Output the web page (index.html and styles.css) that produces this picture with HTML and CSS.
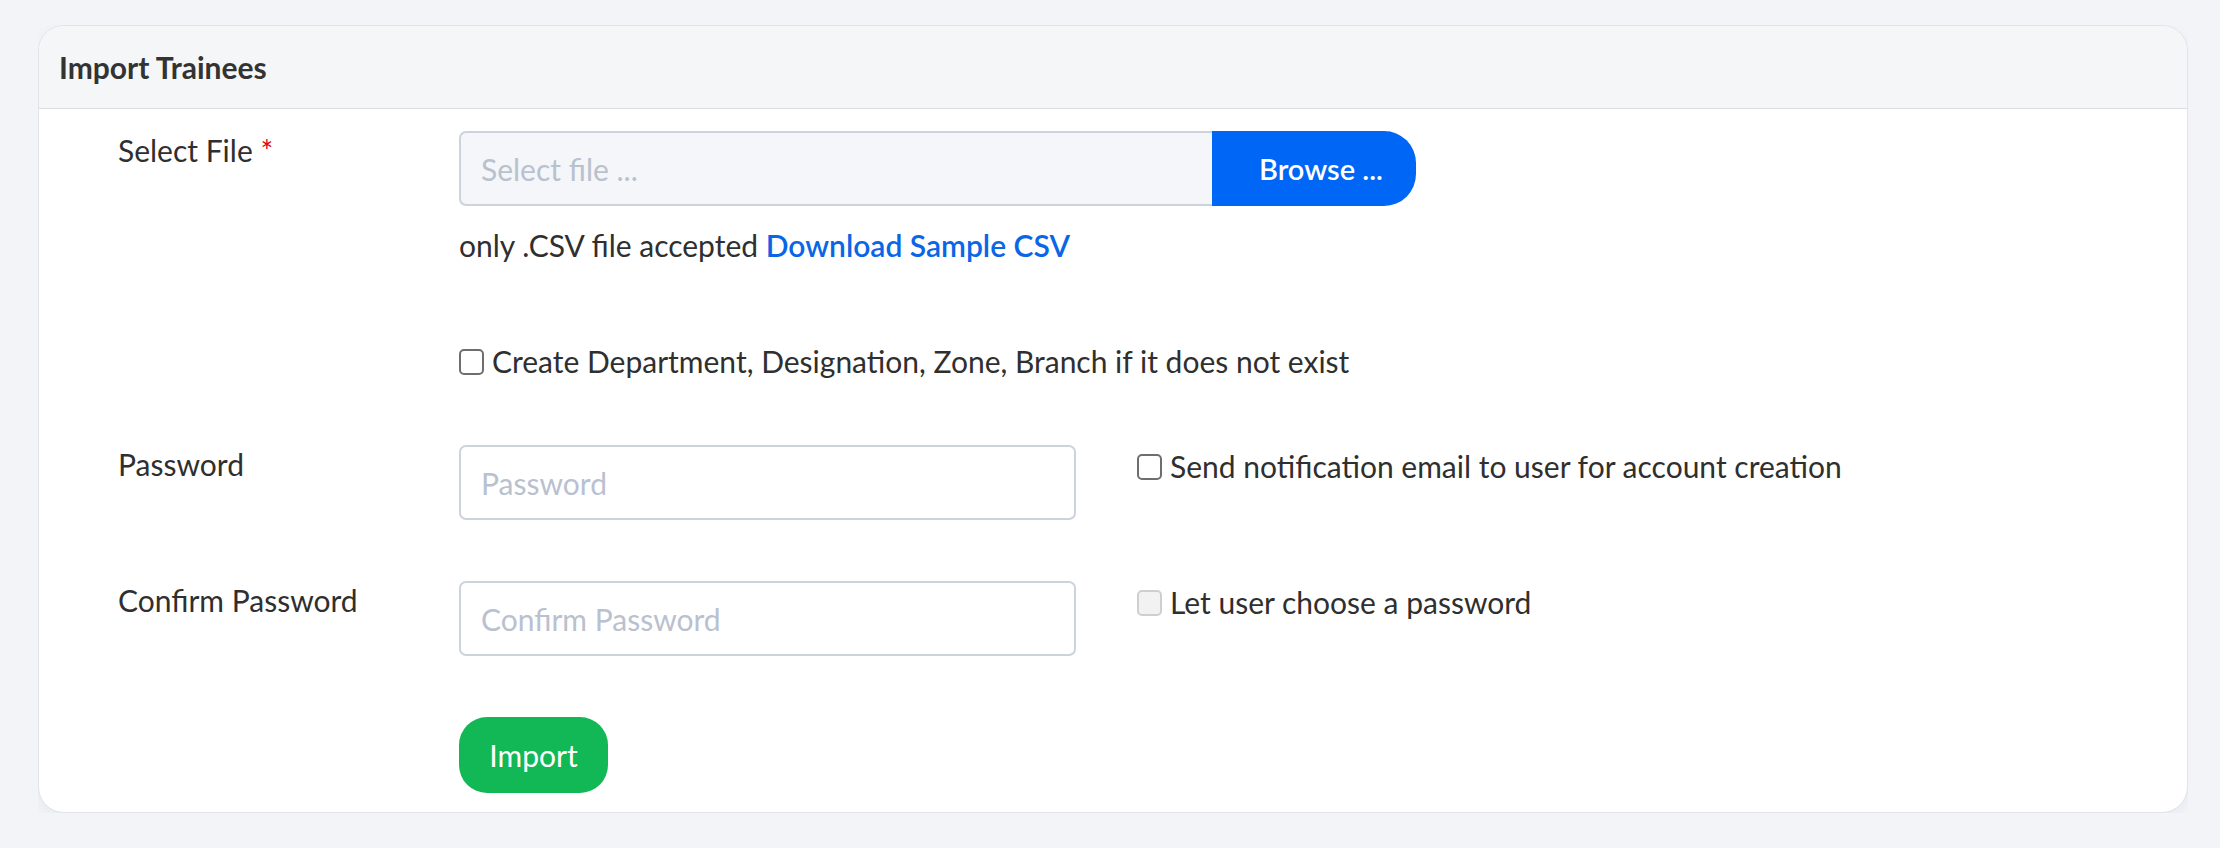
FILE: index.html
```html
<!DOCTYPE html>
<html lang="en">
<head>
    <meta charset="UTF-8">
    <meta name="viewport" content="width=device-width, initial-scale=1.0">
    <title>Import Trainees</title>
    <link rel="stylesheet" href="styles.css">
</head>
<body>
    <div class="card">
        <div class="card-header">Import Trainees</div>

        <form class="card-body" onsubmit="return false">
            <label class="form-label" for="file">Select File <span class="req">*</span></label>
            <div class="file-block">
                <div class="file-group">
                    <input type="text" id="file" class="file-input" placeholder="Select file ..." readonly>
                    <button type="button" class="btn btn-browse">Browse ...</button>
                </div>
                <p class="help">only .CSV file accepted <a href="#">Download Sample CSV</a></p>
            </div>

            <label class="check check-wide">
                <input type="checkbox">
                Create Department, Designation, Zone, Branch if it does not exist
            </label>

            <label class="form-label" for="password">Password</label>
            <input type="password" id="password" class="text-input" placeholder="Password">
            <label class="check">
                <input type="checkbox">
                Send notification email to user for account creation
            </label>

            <label class="form-label" for="confirm">Confirm Password</label>
            <input type="password" id="confirm" class="text-input" placeholder="Confirm Password">
            <label class="check">
                <input type="checkbox" disabled>
                Let user choose a password
            </label>

            <button type="submit" class="btn btn-import">Import</button>
        </form>
    </div>
</body>
</html>
```

FILE: styles.css
```css
body {
    font-family: Lato, "Noto Sans", sans-serif;
    font-size: 30px;
    color: #2f2f2f;
    background-color: #f3f4f8;
    margin: 25px 32px 0 38px;
}
.card {
    background-color: #fff;
    border: 1px solid #e1e3e8;
    border-radius: 26px;
    box-shadow: 0 4px 14px rgba(30, 40, 80, 0.05);
    overflow: hidden;
}
.card-header {
    height: 82px;
    padding: 0 20px;
    display: flex;
    align-items: center;
    background-color: #f5f6f7;
    border-bottom: 1px solid #dcdee2;
    font-weight: 700;
    font-size: 30px;
    color: #333;
}
.card-body {
    display: grid;
    grid-template-columns: 280px 617px 1fr;
    column-gap: 61px;
    row-gap: 61px;
    align-items: start;
    padding: 22px 0 19px 79px;
    margin: 0;
}
.form-label {
    grid-column: 1;
    line-height: 39px;
}
.req {
    color: #e3000f;
}
.file-block {
    grid-column: 2 / 4;
}
.file-group {
    display: flex;
    width: 957px;
    height: 75px;
}
.file-input {
    flex: 1;
    min-width: 0;
    font: inherit;
    padding: 0 20px;
    background-color: #f4f6f9;
    border: 2px solid #cdd3dc;
    border-right: none;
    border-radius: 7px 0 0 7px;
    outline: none;
}
.text-input {
    grid-column: 2;
    height: 75px;
    box-sizing: border-box;
    font: inherit;
    padding: 0 20px;
    background-color: #fff;
    border: 2px solid #cdd3dc;
    border-radius: 7px;
    outline: none;
}
::placeholder {
    color: #b9c1cf;
}
.btn {
    font: inherit;
    color: #fff;
    border: none;
    cursor: pointer;
}
.btn-browse {
    width: 204px;
    padding: 0 26px 0 40px;
    background-color: #0066f5;
    border-radius: 0 32px 32px 0;
    font-weight: 600;
    font-size: 29px;
}
.btn-browse:hover {
    background-color: #0059d6;
}
.help {
    margin: 17px 0 0;
    line-height: 45px;
}
.help a {
    color: #0a66e6;
    font-weight: 600;
    text-decoration: none;
}
.check {
    grid-column: 3;
    display: flex;
    align-items: center;
    gap: 8px;
    line-height: 45px;
    margin-top: -1px;
}
.check-wide {
    grid-column: 2 / 4;
    margin-top: 10px;
}
.check input {
    appearance: none;
    width: 25px;
    height: 26px;
    margin: 0;
    flex-shrink: 0;
    border: 2px solid #6e6e6e;
    border-radius: 5px;
    background-color: #fff;
}
.check input:disabled {
    border-color: #cfcfcf;
    background-color: #f2f2f2;
}
.btn-import {
    grid-column: 2;
    justify-self: start;
    width: 149px;
    height: 76px;
    background-color: #13b856;
    border-radius: 28px;
}
.btn-import:hover {
    background-color: #10a24b;
}
```
